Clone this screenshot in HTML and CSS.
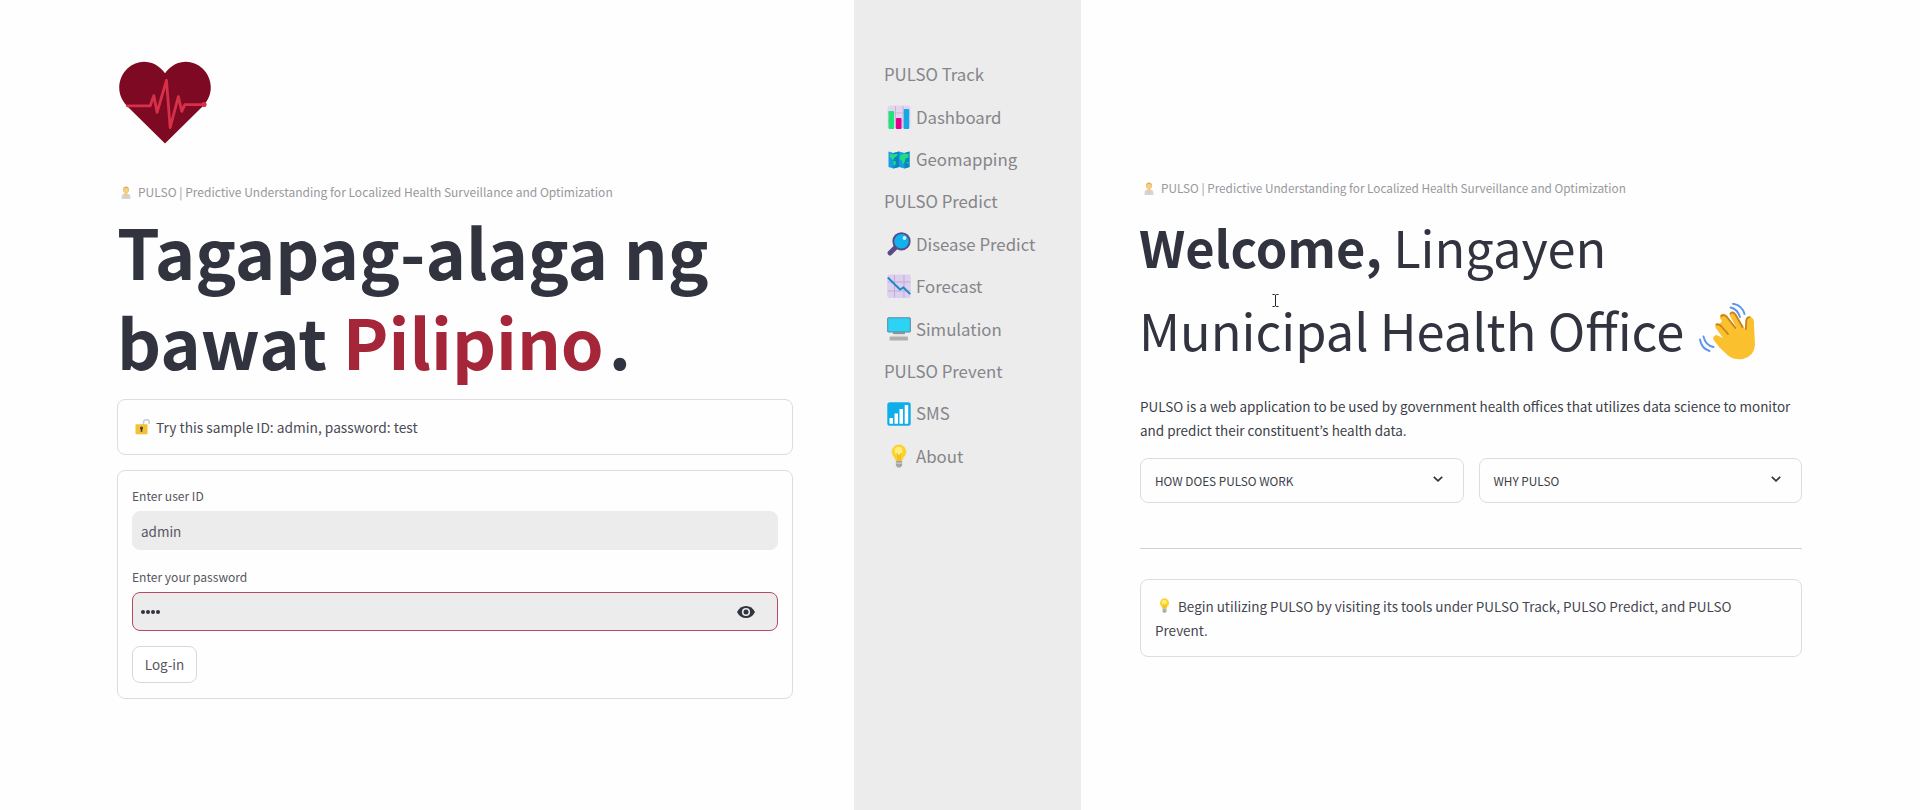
FILE: index.html
```html
<!DOCTYPE html>
<html lang="en">
<head>
<meta charset="utf-8">
<title>PULSO</title>
<link rel="stylesheet" href="styles.css">
</head>
<body>
<svg class="defs" width="0" height="0" aria-hidden="true">
  <symbol id="doctor" viewBox="0 0 12 16">
    <path d="M0.6 16V13q0-3 3.4-3.4h4Q11.400 10 11.400 13v3z" fill="#d3d5dc"/>
    <path d="M4.200 8h3.600v3L6 15 4.200 11z" fill="#f1c98a"/>
    <path d="M2.500 5Q2 .6 6 .6T9.500 5L9 7.500H3z" fill="#dcae5a"/>
    <ellipse cx="6" cy="5.800" rx="2.900" ry="3.600" fill="#f6cf83"/>
  </symbol>
  <symbol id="bulb" viewBox="0 0 16 24">
    <path d="M8 .5a7.300 7.300 0 0 0-7.300 7.300c0 4 3.600 5.600 4 9.200h6.600c.4-3.600 4-5.200 4-9.200A7.300 7.300 0 0 0 8 .5z" fill="#fbd32f"/>
    <circle cx="7.500" cy="6.800" r="4" fill="#ffee78"/>
    <path d="M5.500 9l1.500 2v6M10.500 9L9 11v6" fill="none" stroke="#e9a91c" stroke-width=".9"/>
    <path d="M4.900 17h6.200v4.500L9.500 23.500h-3L4.900 21.500z" fill="#a3a6ab"/>
    <path d="M4.900 19.200h6.200" stroke="#cfd1d4"/>
  </symbol>
  <symbol id="chevron" viewBox="0 0 10 6">
    <path d="M.8.800L5 4.800 9.200.800" fill="none" stroke="#31333f" stroke-width="1.700"/>
  </symbol>
</svg>

<main class="login">
  <svg class="logo" viewBox="0 0 94 84">
    <path d="M47 83.500L8.500 45.500C-3 34-1 17 9 7.500 20-2.500 37-1.500 47 12.500 57-1.500 74-2.500 85 7.500c10 9.500 12 26.500.5 38z" fill="#7d0a22"/>
    <path d="M9 45.500h23l3.700-10.500 3.300 17L48.500 19.500l3.700 48L60.500 36l3.500 15 3-6.800h18" fill="none" stroke="#d9304a" stroke-width="2.800" stroke-linejoin="round" stroke-linecap="round"/>
    <circle cx="86.500" cy="44" r="2.600" fill="#d9304a"/>
  </svg>
  <p class="caption"><svg class="doc"><use href="#doctor"/></svg><span>PULSO | Predictive Understanding for Localized Health Surveillance and Optimization</span></p>
  <h1 class="tagline">Tagapag-alaga ng<br>bawat <span class="accent">Pilipino</span><span class="stop">.</span></h1>
  <div class="card hint">
    <svg class="lock" viewBox="0 0 16 16"><path d="M8.500 6V3.600a2.900 2.900 0 0 1 5.800 0V5" fill="none" stroke="#c9ccd1" stroke-width="1.500"/><rect x=".5" y="5.300" width="12" height="10" rx="1" fill="#f6c033"/><circle cx="6.500" cy="9" r="1.500" fill="#3d3a40"/><path d="M5.700 9h1.600v3.800H5.700z" fill="#3d3a40"/></svg>
    <span>Try this sample ID: admin, password: test</span>
  </div>
  <form class="card form">
    <label>Enter user ID</label>
    <div class="field">admin</div>
    <label class="second">Enter your password</label>
    <div class="field focus"><span class="dots"><i></i><i></i><i></i><i></i></span>
      <svg class="eye" viewBox="0 0 18 12"><path d="M0 6Q3 0 9 0t9 6q-3 6-9 6T0 6z" fill="#31333f"/><circle cx="9" cy="6" r="4.100" fill="#ececec"/><circle cx="9" cy="6" r="2.500" fill="#31333f"/></svg>
    </div>
    <button type="button">Log-in</button>
  </form>
</main>

<aside class="sidebar">
  <div class="group">PULSO Track</div>
  <div class="item"><svg viewBox="0 0 24 24"><rect x=".5" y=".5" width="23" height="23" rx="3" fill="#e3d5ee"/><path d="M8.500 1v22M16 1v22M1 8h22M1 16h22" stroke="#c7b4d4" stroke-width="1"/><rect x="1.500" y="6" width="5.500" height="18" rx=".8" fill="#1fe579"/><rect x="9" y="13" width="5.500" height="11" rx=".8" fill="#e3008c"/><rect x="16.700" y="4" width="5.500" height="20" rx=".8" fill="#14a9e4"/></svg><span>Dashboard</span></div>
  <div class="item"><svg viewBox="0 0 24 24"><path d="M1.500 4.500l5 1.500L12 4.500 17.500 6l5-1.500v15.500l-5 1.500-5.500-1.500L6.500 21.500l-5-1.500z" fill="#159fdf"/><path d="M6.500 6L12 4.500V20l-5.500 1.500zM17.500 6l5-1.500V20l-5 1.500z" fill="#0b86bd"/><path d="M3 7l4 .5 3-1 .5 2-3 2-1.500 2.500L3 10zM6 14l3 .5-.5 3L7 19zM13 8.500l4-2 4.500.5v3.500l-3 1-.5 2.500-2 3.500-1.500-4.500L12.500 12zM19 15.500l2.500-.5v2z" fill="#20dc83"/></svg><span>Geomapping</span></div>
  <div class="group">PULSO Predict</div>
  <div class="item"><svg viewBox="0 0 24 24"><path d="M3 21l6-6" stroke="#5b4a87" stroke-width="4.800" stroke-linecap="round"/><circle cx="14.500" cy="9.300" r="8.200" fill="#0fb2ec" stroke="#5b4a87" stroke-width="1.900"/><circle cx="17.500" cy="6" r="1.900" fill="#c9f2ff"/></svg><span>Disease Predict</span></div>
  <div class="item"><svg viewBox="0 0 24 24"><rect x=".3" y=".5" width="23.400" height="23.400" rx="2.500" fill="#dccff0"/><path d="M7.500 1v22.500M17 1v22.500M.5 8h23M.5 17h23" stroke="#bfadcf" stroke-width="1"/><path d="M.8 3.500l12.200 12 3.500-2 6.700 6.700" fill="none" stroke="#1b87c4" stroke-width="1.900"/></svg><span>Forecast</span></div>
  <div class="item"><svg viewBox="0 0 24 24"><rect x=".7" y=".8" width="22.600" height="14.200" rx=".5" fill="#2cd3f5" stroke="#5d83a0" stroke-width="1"/><path d="M6 15h12v2H6z" fill="#8d9499"/><path d="M7 17h10l1 1.500H6z" fill="#dfdfdf"/><rect x="2.500" y="19.500" width="18.500" height="4" rx="1" fill="#b0b0b0"/></svg><span>Simulation</span></div>
  <div class="group">PULSO Prevent</div>
  <div class="item"><svg viewBox="0 0 24 24"><rect x=".3" y=".3" width="23.400" height="23.400" rx="2.500" fill="#10aee8"/><path d="M2.500 16h3.500v5.700H2.500zM7.500 11.500H11v10.200H7.500zM12.500 7H16v14.700h-3.500zM17.700 3h3.500v18.700h-3.500z" fill="#fff"/></svg><span>SMS</span></div>
  <div class="item"><svg><use href="#bulb"/></svg><span>About</span></div>
</aside>

<section class="home">
  <p class="caption"><svg class="doc"><use href="#doctor"/></svg><span>PULSO | Predictive Understanding for Localized Health Surveillance and Optimization</span></p>
  <h1 class="welcome"><b>Welcome,</b> Lingayen<br>Municipal Health Office<svg class="wave" viewBox="0 0 57 57"><path d="M20.500 44.500L14.700 37Q13 33.300 17.500 32L26 36 16.500 24.500Q15.500 19.500 20.500 20.500L31 31 21 15Q20.500 10 26 11L38.500 27 30.500 12Q31 7.500 35.500 9.500L46.500 27 47 17.500Q48.500 13 52.500 14.500 55.500 16 55 22L56 42Q55 53.500 44 56 36 57.500 29 52.500z" fill="#fbc02d"/><path d="M24 17L40 33 30 44 17 25z" fill="#fbc02d"/><path d="M17.500 21.500Q20 21 22 23l7 8M22.500 13q2-2 5 .5L36.500 25M31.500 10.500q2-2.500 5 1L43.500 24M46.800 26l.5-9q1-3 3.500-2.800" fill="none" stroke="#c88219" stroke-width="1.800" stroke-linecap="round"/><path d="M31.500 4.500Q38 5.500 41 14M34 .8Q43 2 45.500 11M4.500 33.500Q6.500 42.500 14.500 44M1 36.500Q2.500 45.500 10.500 48" fill="none" stroke="#5b95ee" stroke-width="1.900" stroke-linecap="round"/></svg></h1>
  <svg class="cursor" viewBox="0 0 7 13"><path d="M.5.500h2.200L3.500 1.200 4.300.500h2.200M.5 12.500h2.200l.8-.7.8.7h2.200M3.500 1v11" fill="none" stroke="#222"/></svg>
  <p class="intro">PULSO is a web application to be used by government health offices that utilizes data science to monitor<br>and predict their constituent’s health data.</p>
  <div class="expanders">
    <div class="card expander"><span>HOW DOES PULSO WORK</span><svg><use href="#chevron"/></svg></div>
    <div class="card expander"><span>WHY PULSO</span><svg><use href="#chevron"/></svg></div>
  </div>
  <hr>
  <div class="card tip"><svg><use href="#bulb"/></svg>Begin utilizing PULSO by visiting its tools under PULSO Track, PULSO Predict, and PULSO<br>Prevent.</div>
</section>
</body>
</html>
```

FILE: styles.css
```css
* { box-sizing: border-box; }
body {
  margin: 0;
  display: flex;
  width: 1920px;
  height: 810px;
  overflow: hidden;
  background: #fefefe;
  color: #31333f;
  font-family: "Noto Sans CJK KR", "Noto Sans", sans-serif;
  font-size: 13.470px;
  white-space: nowrap;
}
svg { display: block; flex: none; }
.defs { position: absolute; }
h1, p { margin: 0; }
.card { border: 1px solid #dddde0; border-radius: 8px; }

.login { width: 854px; padding: 61px 61px 0 117px; }
.logo { width: 94px; height: 83px; margin-left: 1px; }
.caption { display: flex; align-items: center; height: 24px; line-height: 24px; color: #98989c; }
.doc { width: 10px; height: 13px; margin: 0 7px 0 4px; }
.login .caption { margin-top: 36px; font-size: 12.030px; }
.tagline { margin-top: 1px; font-size: 68.600px; line-height: 90px; font-weight: 700; }
.accent { color: #a62639; }
.stop { margin-left: 5px; }
.hint { display: flex; align-items: center; height: 56px; margin-top: 14px; padding-left: 17px; color: #4a4b55; font-size: 13.750px; }
.lock { width: 16px; height: 16px; margin-right: 5px; }
.form { height: 229px; margin-top: 15px; padding: 15px 14px 0; color: #55565f; }
label { display: block; height: 25px; line-height: 20px; font-size: 12.050px; }
.second { margin-top: 17px; }
.field { display: flex; align-items: center; height: 39px; padding: 0 22px 0 8px; background: #ececec; border-radius: 8px; border: 1px solid #ececec; }
.focus { border-color: #b54a62; }
.dots { display: flex; gap: 1px; }
.dots i { width: 4px; height: 4px; border-radius: 50%; background: #31333f; }
.eye { width: 18px; height: 12px; margin-left: auto; }
button { display: block; height: 37px; width: 65px; margin-top: 15px; padding: 0 0 1px; border: 1px solid #d8d8dc; border-radius: 8px; background: #fff; color: #55565f; font: inherit; }

.sidebar { width: 227px; padding: 53.200px 0 0 30px; background: #ececec; color: #85858a; font-size: 16.800px; line-height: 42.400px; }
.item { display: flex; align-items: center; height: 42.400px; padding-left: 3px; }
.group { height: 42.400px; }
.item svg { width: 24px; height: 24px; margin-right: 5px; }

.home { position: relative; width: 721px; padding: 176px 0 0 59px; }
.home .caption { font-size: 11.780px; }
.welcome { margin-top: 5px; margin-left: -1px; font-size: 50.550px; line-height: 83px; font-weight: 400; }
.wave { display: inline-block; width: 57px; height: 57px; margin-left: 15px; vertical-align: -9px; }
.cursor { position: absolute; left: 191px; top: 294px; width: 7px; height: 13px; }
.intro { margin-top: 23px; line-height: 24px; color: #3c3e48; }
.expanders { display: grid; grid-template-columns: 1fr 1fr; gap: 15px; margin-top: 16px; }
.expander { display: flex; align-items: center; justify-content: space-between; height: 45px; padding: 0 20px 1px 14px; font-size: 11.800px; color: #3c3e48; }
.expander svg { width: 10px; height: 6px; margin-top: -2px; }
hr { height: 1px; margin: 45px 0 30px; border: 0; background: #d0d1d5; }
.tip { height: 78px; padding: 14px 14px; line-height: 24px; color: #44464f; }
.tip svg { display: inline-block; width: 11px; height: 15px; margin: 0 8px 0 4px; vertical-align: -1px; }
```
